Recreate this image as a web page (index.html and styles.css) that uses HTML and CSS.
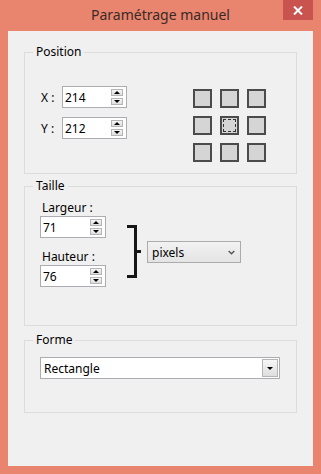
FILE: index.html
```html
<!DOCTYPE html>
<html lang="fr">

<head>
    <meta charset="UTF-8">
    <meta name="viewport" content="width=device-width, initial-scale=1.0">
    <title>Paramétrage manuel</title>
    <link rel="stylesheet" href="styles.css">
</head>

<body>
    <div class="window">
        <!-- barre de titre -->
        <div class="titlebar">
            <span class="title">Paramétrage manuel</span>
            <button class="close-btn" aria-label="Fermer">
                <svg width="10" height="9" viewBox="0 0 10 9">
                    <path d="M1 0.5 L9 8.5 M9 0.5 L1 8.5" stroke="#fff" stroke-width="2" fill="none" />
                </svg>
            </button>
        </div>

        <div class="client">
            <!-- Position -->
            <div class="group group-position">
                <div class="group-title">Position</div>
                <div class="position-body">
                    <div class="coords">
                        <div class="coord-row">
                            <span class="coord-label">X :</span>
                            <div class="spinbox">
                                <span class="spin-value">214</span>
                                <div class="spin-buttons">
                                    <span class="spin-btn up"></span>
                                    <span class="spin-btn down"></span>
                                </div>
                            </div>
                        </div>
                        <div class="coord-row">
                            <span class="coord-label">Y :</span>
                            <div class="spinbox">
                                <span class="spin-value">212</span>
                                <div class="spin-buttons">
                                    <span class="spin-btn up"></span>
                                    <span class="spin-btn down"></span>
                                </div>
                            </div>
                        </div>
                    </div>
                    <div class="anchor-grid">
                        <span class="anchor-cell"></span>
                        <span class="anchor-cell"></span>
                        <span class="anchor-cell"></span>
                        <span class="anchor-cell"></span>
                        <span class="anchor-cell selected"></span>
                        <span class="anchor-cell"></span>
                        <span class="anchor-cell"></span>
                        <span class="anchor-cell"></span>
                        <span class="anchor-cell"></span>
                    </div>
                </div>
            </div>

            <!-- Taille -->
            <div class="group group-size">
                <div class="group-title">Taille</div>
                <div class="size-body">
                    <div class="size-col">
                        <span class="field-label">Largeur :</span>
                        <div class="spinbox wide">
                            <span class="spin-value">71</span>
                            <div class="spin-buttons">
                                <span class="spin-btn up"></span>
                                <span class="spin-btn down"></span>
                            </div>
                        </div>
                        <span class="field-label second">Hauteur :</span>
                        <div class="spinbox wide">
                            <span class="spin-value">76</span>
                            <div class="spin-buttons">
                                <span class="spin-btn up"></span>
                                <span class="spin-btn down"></span>
                            </div>
                        </div>
                    </div>
                    <svg class="bracket" width="14" height="53" viewBox="0 0 14 53">
                        <path d="M0 0 H10 V53 H0 V50 H7 V3 H0 Z M10 25 H14 V28 H10 Z" fill="#161616" />
                    </svg>
                    <div class="unit-select">
                        <span>pixels</span>
                        <svg width="7" height="5" viewBox="0 0 7 5">
                            <path d="M0.7 1 L3.5 3.8 L6.3 1" stroke="#555" stroke-width="1.4" fill="none" />
                        </svg>
                    </div>
                </div>
            </div>

            <!-- Forme -->
            <div class="group group-shape">
                <div class="group-title">Forme</div>
                <div class="shape-body">
                    <div class="combo">
                        <span>Rectangle</span>
                        <span class="combo-btn"></span>
                    </div>
                </div>
            </div>
        </div>
    </div>
</body>

</html>
```

FILE: styles.css
```css
body {
    margin: 0;
    font-family: "Noto Sans", "Open Sans", sans-serif;
    font-size: 12px;
    color: #000;
}

.window {
    width: 321px;
    height: 474px;
    box-sizing: border-box;
    padding: 0 8px 8px;
    background-color: #e9846f;
    display: flex;
    flex-direction: column;
}

/* barre de titre */
.titlebar {
    height: 31px;
    display: grid;
    grid-template-columns: 1fr auto 1fr;
}

.title {
    grid-column: 2;
    font-size: 14px;
    line-height: 30px;
    color: #3a2a26;
}

.close-btn {
    grid-column: 3;
    justify-self: end;
    width: 30px;
    height: 20px;
    padding: 0;
    border: 0;
    background-color: #c9534f;
    display: flex;
    align-items: center;
    justify-content: center;
}

.client {
    flex: 1;
    background-color: #f0f0f0;
    padding: 21px 16px 0;
}

/* group box */
.group {
    box-sizing: border-box;
    border: 1px solid #dcdcdc;
}

.group-title {
    width: fit-content;
    line-height: 16px;
    margin: -9px 0 0 8px;
    padding: 0 3px;
    background-color: #f0f0f0;
}

.group-position {
    height: 122px;
    margin-bottom: 12px;
}

.group-size {
    height: 140px;
    margin-bottom: 14px;
}

.group-shape {
    height: 73px;
}

/* spin box */
.spinbox {
    width: 65px;
    height: 22px;
    box-sizing: border-box;
    border: 1px solid #abadb3;
    background-color: #fff;
    padding: 0 3px 0 2px;
    display: flex;
    align-items: center;
    justify-content: space-between;
}

.spinbox.wide {
    width: 66px;
}

.spin-buttons {
    display: flex;
    flex-direction: column;
    gap: 2px;
}

.spin-btn {
    width: 12px;
    height: 7px;
    box-sizing: border-box;
    border: 1px solid #b5b5b5;
    background: linear-gradient(#f6f6f6, #dedede);
    display: flex;
    align-items: center;
    justify-content: center;
}

.spin-btn::after {
    content: "";
    border-left: 3px solid transparent;
    border-right: 3px solid transparent;
}

.spin-btn.up::after {
    border-bottom: 3px solid #000;
}

.spin-btn.down::after {
    border-top: 3px solid #000;
}

/* Position */
.position-body {
    display: flex;
    padding: 26px 0 0 16px;
}

.coords {
    display: flex;
    flex-direction: column;
    gap: 9px;
}

.coord-row {
    display: flex;
    align-items: center;
}

.coord-label {
    width: 21px;
}

.anchor-grid {
    display: grid;
    grid-template-columns: repeat(3, 19px);
    grid-auto-rows: 19px;
    gap: 8px;
    margin: 3px 0 0 66px;
}

.anchor-cell {
    box-sizing: border-box;
    border: 2px solid #4b4b4b;
    background-color: #d5d5d5;
    display: flex;
    align-items: center;
    justify-content: center;
}

.anchor-cell.selected::after {
    content: "";
    width: 13px;
    height: 13px;
    box-sizing: border-box;
    border: 1px dashed #333;
}

/* Taille */
.size-body {
    display: flex;
    align-items: flex-start;
    padding: 6px 0 0 15px;
}

.size-col {
    display: flex;
    flex-direction: column;
}

.field-label {
    line-height: 16px;
    padding-left: 2px;
}

.field-label.second {
    margin-top: 11px;
}

.bracket {
    margin: 25px 0 0 21px;
}

.unit-select {
    width: 94px;
    height: 22px;
    box-sizing: border-box;
    margin: 41px 0 0 6px;
    padding: 0 5px 0 4px;
    border: 1px solid #acacac;
    background: linear-gradient(#f2f2f2, #e4e4e4);
    display: flex;
    align-items: center;
    justify-content: space-between;
}

/* Forme */
.shape-body {
    padding: 9px 0 0 15px;
}

.combo {
    width: 240px;
    height: 22px;
    box-sizing: border-box;
    border: 1px solid #abadb3;
    background-color: #fff;
    padding: 0 1px 0 3px;
    display: flex;
    align-items: center;
    justify-content: space-between;
}

.combo-btn {
    width: 16px;
    height: 18px;
    box-sizing: border-box;
    border: 1px solid #b5b5b5;
    background: linear-gradient(#f6f6f6, #dedede);
    display: flex;
    align-items: center;
    justify-content: center;
}

.combo-btn::after {
    content: "";
    border-left: 3px solid transparent;
    border-right: 3px solid transparent;
    border-top: 3px solid #000;
}
```
